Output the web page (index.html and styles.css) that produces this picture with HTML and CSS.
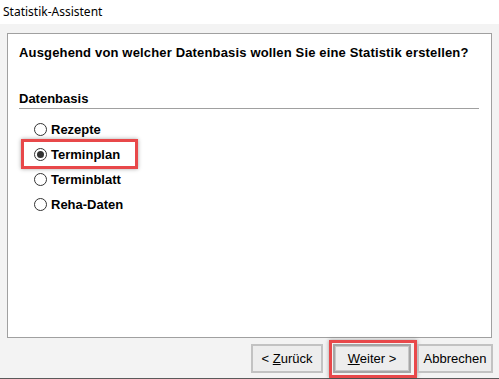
FILE: index.html
```html
<!DOCTYPE html>
<html lang="de">
<head>
  <meta charset="UTF-8">
  <title>Statistik-Assistent</title>
  <link rel="stylesheet" href="styles.css">
</head>
<body>
  <div class="window">
    <div class="titlebar">Statistik-Assistent</div>

    <div class="panel">
      <h1 class="question">Ausgehend von welcher Datenbasis wollen Sie eine Statistik erstellen?</h1>

      <div class="group">
        <div class="group-title">Datenbasis</div>
        <div class="options">
          <label class="option"><span class="radio"></span>Rezepte</label>
          <label class="option marked"><span class="radio checked"></span>Terminplan</label>
          <label class="option"><span class="radio"></span>Terminblatt</label>
          <label class="option"><span class="radio"></span>Reha-Daten</label>
        </div>
      </div>
    </div>

    <div class="buttons">
      <button class="btn btn-back">&lt; <u>Z</u>urück</button>
      <button class="btn btn-next default marked"><u>W</u>eiter &gt;</button>
      <button class="btn btn-cancel">Abbrechen</button>
    </div>
  </div>
</body>
</html>
```

FILE: styles.css
```css
body {
  margin: 0;
  background: #f3f3f3;
  font-family: "Liberation Sans", Arial, sans-serif;
  color: #000;
}
.window {
  height: 379px;
  box-sizing: border-box;
  border-bottom: 1px solid #5a5a5a;
}
.titlebar {
  height: 24px;
  line-height: 24px;
  padding-left: 3px;
  background: #fff;
  font-family: "Noto Sans", "Open Sans", sans-serif;
  font-size: 12px;
}
.panel {
  margin: 9px 0 0 7px;
  width: 485px;
  height: 305px;
  box-sizing: border-box;
  padding: 11px 12px 0 11px;
  background: #fff;
  border: 1px solid #a0a0a0;
}
.question {
  margin: 0;
  font-size: 13px;
  line-height: 15px;
  font-weight: bold;
  letter-spacing: 0.16px;
}
.group {
  margin-top: 31px;
}
.group-title {
  font-size: 13px;
  line-height: 15px;
  font-weight: bold;
  padding-bottom: 2px;
  border-bottom: 1px solid #a0a0a0;
}
.options {
  margin-top: 8px;
}
.option {
  position: relative;
  display: flex;
  align-items: center;
  width: max-content;
  height: 25px;
  margin-left: 15px;
  font-size: 13px;
  font-weight: bold;
}
.radio {
  position: relative;
  width: 13px;
  height: 13px;
  box-sizing: border-box;
  margin-right: 4px;
  border: 1px solid #333;
  border-radius: 50%;
  background: #fff;
}
.radio.checked::after {
  content: "";
  position: absolute;
  left: 2px;
  top: 2px;
  width: 7px;
  height: 7px;
  border-radius: 50%;
  background: #333;
}
.option.marked::before {
  content: "";
  position: absolute;
  left: -13px;
  top: -3px;
  width: 117px;
  height: 30px;
  box-sizing: border-box;
  border: 3px solid #e8484a;
  box-shadow: 0 0 4px rgba(0,0,0,0.35);
}
.buttons {
  display: flex;
  justify-content: flex-end;
  margin-top: 6px;
  padding-right: 6px;
}
.btn {
  position: relative;
  height: 29px;
  padding: 0;
  background: #ededed;
  border: 2px solid #c2c2c2;
  font-family: "Liberation Sans", Arial, sans-serif;
  font-size: 13px;
  color: #000;
}
.btn-back {
  width: 72px;
}
.btn-next {
  width: 78px;
  margin-left: 10px;
}
.btn-cancel {
  width: 76px;
  margin-left: 6px;
}
.btn.default {
  border-color: #a6a6a6;
  box-shadow: inset 0 0 0 1px #c8c8c8;
}
.btn.marked::before {
  content: "";
  position: absolute;
  left: -6px;
  top: -6px;
  right: -8px;
  bottom: -7px;
  border: 3px solid #e8484a;
  box-shadow: 0 0 4px rgba(0,0,0,0.35);
}
```
